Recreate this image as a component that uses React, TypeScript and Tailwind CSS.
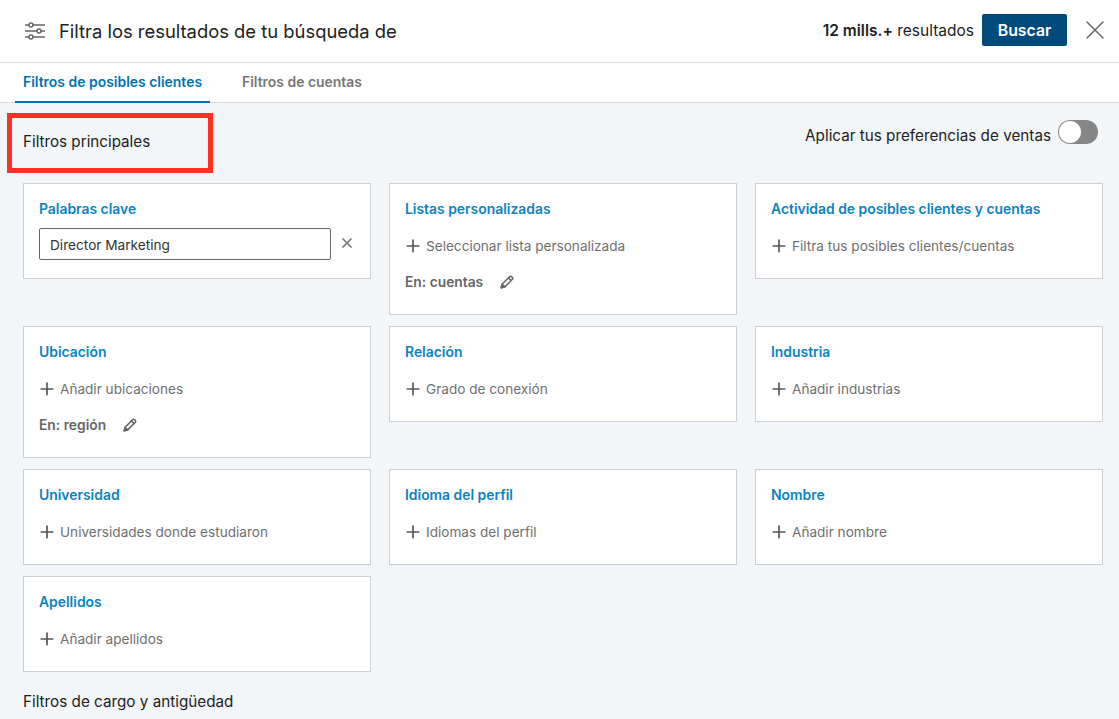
import { Plus, X } from "lucide-react";

const cards = [
  { title: "Palabras clave", input: "Director Marketing" },
  { title: "Listas personalizadas", add: "Seleccionar lista personalizada", scope: "En: cuentas" },
  { title: "Actividad de posibles clientes y cuentas", add: "Filtra tus posibles clientes/cuentas" },
  { title: "Ubicación", add: "Añadir ubicaciones", scope: "En: región" },
  { title: "Relación", add: "Grado de conexión" },
  { title: "Industria", add: "Añadir industrias" },
  { title: "Universidad", add: "Universidades donde estudiaron" },
  { title: "Idioma del perfil", add: "Idiomas del perfil" },
  { title: "Nombre", add: "Añadir nombre" },
  { title: "Apellidos", add: "Añadir apellidos" },
];

function SlidersIcon() {
  return (
    <svg width="24" height="24" viewBox="0 0 24 24" fill="none" stroke="#666" strokeWidth="1.5">
      <path d="M2 6h4M10 6h12M2 12h12M18 12h4M2 18h4M10 18h12" />
      <circle cx="8" cy="6" r="2" />
      <circle cx="16" cy="12" r="2" />
      <circle cx="8" cy="18" r="2" />
    </svg>
  );
}

function PencilIcon() {
  return (
    <svg width="16" height="16" viewBox="0 0 16 16" className="ml-[16px]" fill="none" stroke="#666" strokeWidth="1.5" strokeLinejoin="round">
      <path d="M2.2 13.8l.9-3.6 7.6-7.6a1.3 1.3 0 0 1 1.8 0l.9.9a1.3 1.3 0 0 1 0 1.8l-7.6 7.6z" />
      <path d="M9.4 3.9l2.7 2.7" />
      <path d="M2.2 13.8l.9-3.6 2.7 2.7z" fill="#666" />
    </svg>
  );
}

function FilterCard({ title, input, add, scope }: { title: string; input?: string; add?: string; scope?: string }) {
  return (
    <div className={`border border-[#ccd0d4] bg-white px-[15px] pt-[15px] ${input ? "pb-[18px]" : "pb-[22px]"}`}>
      <h3 className="h-[20px] text-[13.9px] leading-[20px] font-semibold text-[#0a84c1]">{title}</h3>
      {input && (
        <div className="mt-[9px] flex items-center">
          <div className="flex h-[32px] w-[292px] items-center rounded-[2px] border border-[#666] px-[10px] pt-[2px] text-[13.65px] text-[#333]">
            {input}
          </div>
          <X size={16} strokeWidth={2.6} className="ml-[8px] -mt-[2px] text-[#777]" />
        </div>
      )}
      {add && (
        <div className="mt-[17px] flex h-[20px] items-center text-[13.6px] text-[#6f6f6f]">
          <Plus size={20} strokeWidth={2} className="mr-[3px] -ml-[2px] text-[#555]" />
          {add}
        </div>
      )}
      {scope && (
        <div className="mt-[16px] flex h-[20px] items-center text-[13.8px] font-semibold text-[#666]">
          {scope}
          <PencilIcon />
        </div>
      )}
    </div>
  );
}

export default function App() {
  return (
    <div className="relative h-[719px] w-[1119px] overflow-hidden bg-[#f3f6f8] font-['Inter',sans-serif] text-[#222]">
      <header className="flex h-[63px] items-center border-b border-[#dcdcdc] bg-white pr-[8px] pl-[23px]">
        <SlidersIcon />
        <h1 className="ml-[12px] pt-[2px] text-[18.4px] text-[#222]">Filtra los resultados de tu búsqueda de</h1>
        <div className="mb-[2px] ml-auto flex items-center">
          <span className="pt-[2px] text-[15.5px]">
            <b className="font-semibold">12 mills.+</b> resultados
          </span>
          <button className="ml-[8px] h-[32px] w-[85px] rounded-[2px] bg-[#004b7c] pt-[2px] text-[15.8px] font-semibold text-white">
            Buscar
          </button>
          <X size={32} strokeWidth={1.1} className="ml-[12px] text-[#666]" />
        </div>
      </header>

      <nav className="flex h-[40px] items-stretch border-b border-[#dcdcdc] bg-white pl-[15px] text-[13.95px] font-semibold">
        <div className="-mb-px flex w-[195px] items-center border-b-2 border-[#0073b1] px-[8px] whitespace-nowrap text-[#0073b1]">
          Filtros de posibles clientes
        </div>
        <div className="ml-[32px] flex items-center pb-[1px] text-[#777]">Filtros de cuentas</div>
      </nav>

      <main className="px-[16px] pl-[23px]">
        <div className="flex h-[80px] justify-between pr-[5px]">
          <h2 className="mt-[28px] text-[15.2px] leading-[22px]">Filtros principales</h2>
          <div className="mt-[17px] flex items-start">
            <span className="mt-[4px] text-[15.25px] leading-[24px]">Aplicar tus preferencias de ventas</span>
            <span className="ml-[7px] flex h-[24px] w-[40px] items-center rounded-full bg-[#868686] p-[1px]">
              <span className="h-[22px] w-[22px] rounded-full bg-white" />
            </span>
          </div>
        </div>

        <div className="grid w-[1080px] grid-cols-3 items-start gap-x-[18px] gap-y-[11px]">
          {cards.map((card) => (
            <FilterCard key={card.title} {...card} />
          ))}
        </div>

        <h2 className="mt-[19px] text-[15.25px] leading-[22px]">Filtros de cargo y antigüedad</h2>
      </main>

      {/* annotation drawn over the screenshot */}
      <div className="absolute top-[113px] left-[7px] h-[60px] w-[206px] border-[5px] border-[#ff3024]" />
    </div>
  );
}
